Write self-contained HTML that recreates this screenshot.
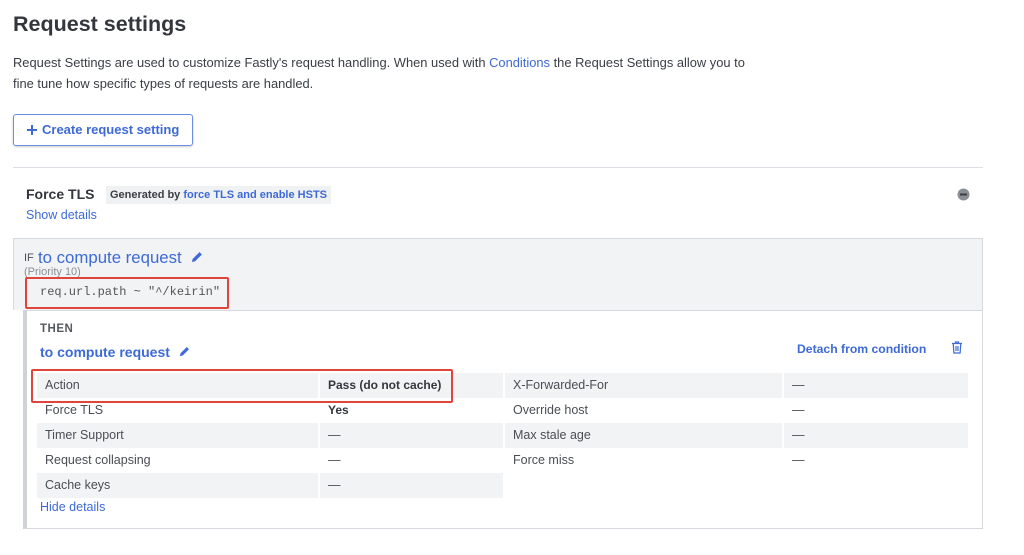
<!DOCTYPE html>
<html><head><meta charset="utf-8"><style>
*{margin:0;padding:0;box-sizing:border-box}
body{width:1024px;height:555px;background:#fff;font-family:"Liberation Sans",sans-serif;color:#3a3e44;position:relative;overflow:hidden}
.a{position:absolute;white-space:nowrap}
.blue{color:#3d6ad6}
.row{position:absolute;height:25px;font-size:12.5px;line-height:25px;padding-left:8px;color:#4a4e55}
.g{background:#f2f3f5}
.red{position:absolute;border:2px solid #e0443c;border-radius:2px}
</style></head><body>
<div class="a" style="left:13px;top:12px;font-size:21.5px;font-weight:bold;color:#33373d">Request settings</div>
<div class="a" style="left:13px;top:52px;font-size:12.9px;line-height:21px;color:#3a3e44">Request Settings are used to customize Fastly's request handling. When used with <span class="blue">Conditions</span> the Request Settings allow you to<br>fine tune how specific types of requests are handled.</div>
<div class="a" style="left:13px;top:114px;width:180px;height:32px;border:1px solid #6b8ee0;border-radius:3px;box-shadow:0 1px 2px rgba(0,0,0,.2);font-size:13px;font-weight:bold;line-height:30px;color:#3d6ad6;padding-left:13px"><svg width="10" height="10" viewBox="0 0 10 10" style="vertical-align:-1px;margin-right:5px"><path d="M5 0v10M0 5h10" stroke="#3d6ad6" stroke-width="2"/></svg>Create request setting</div>
<div class="a" style="left:13px;top:167px;width:970px;height:1px;background:#dcdfe3"></div>
<div class="a" style="left:26px;top:186px;font-size:14px;font-weight:bold;color:#33373d">Force TLS</div>
<div class="a" style="left:106px;top:186px;height:18px;background:#f0f1f3;padding:0 4px;font-size:11px;font-weight:bold;line-height:18px;color:#3a3e44">Generated by <span class="blue">force TLS and enable HSTS</span></div>
<div class="a blue" style="left:26px;top:208px;font-size:12.5px">Show details</div>
<svg class="a" style="left:957px;top:188px" width="13" height="13" viewBox="0 0 13 13"><circle cx="6.5" cy="6.5" r="6" fill="#8a8e95"/><rect x="3" y="5.5" width="7" height="2" fill="#3a3e44"/></svg>
<div class="a" style="left:13px;top:238px;width:970px;height:72px;background:#f2f3f5;border:1px solid #d6d9dd;border-bottom:none"></div>
<div class="a" style="left:24px;top:252px;font-size:11px;color:#4a4e55">IF</div>
<div class="a blue" style="left:38px;top:248px;font-size:16.8px">to compute request</div>
<svg class="a" style="left:191px;top:251px" width="12" height="12" viewBox="0 0 12 12"><path d="M1 11l.6-3L8.5 1.1l2.4 2.4L4 10.4z" fill="#3d6ad6"/></svg>
<div class="a" style="left:24px;top:266px;font-size:11px;color:#8a8e95">(Priority 10)</div>
<div class="a" style="left:40px;top:285px;font-size:12px;font-family:'Liberation Mono',monospace;color:#555">req.url.path ~ "^/keirin"</div>
<div class="red" style="left:25px;top:277px;width:204px;height:32px"></div>
<div class="a" style="left:23px;top:310px;width:960px;height:219px;background:#fff;border:1px solid #d6d9dd;border-left:4px solid #cfd3d8"></div>
<div class="a" style="left:40px;top:323px;font-size:11.5px;font-weight:bold;color:#55595f;letter-spacing:.5px">THEN</div>
<div class="a blue" style="left:40px;top:344px;font-size:14px;font-weight:bold">to compute request</div>
<svg class="a" style="left:179px;top:346px" width="11" height="11" viewBox="0 0 12 12"><path d="M1 11l.6-3L8.5 1.1l2.4 2.4L4 10.4z" fill="#3d6ad6"/></svg>
<div class="a blue" style="left:797px;top:342px;font-size:12.2px;font-weight:bold">Detach from condition</div>
<svg class="a" style="left:951px;top:341px" width="12" height="13" viewBox="0 0 12 13"><path d="M1 2.5h10M4.5 2.5V1h3v1.5M2.2 2.5l.7 9.5h6.2l.7-9.5M5 5v5M7 5v5" stroke="#3d6ad6" stroke-width="1.2" fill="none"/></svg>
<div class="row g" style="left:37px;top:373px;width:281px">Action</div>
<div class="row g" style="left:320px;top:373px;width:183px;font-weight:bold;color:#33373d;font-size:12px">Pass (do not cache)</div>
<div class="row" style="left:37px;top:398px;width:281px">Force TLS</div>
<div class="row" style="left:320px;top:398px;width:183px;font-weight:bold;color:#33373d;font-size:12px">Yes</div>
<div class="row g" style="left:37px;top:423px;width:281px">Timer Support</div>
<div class="row g" style="left:320px;top:423px;width:183px">—</div>
<div class="row" style="left:37px;top:448px;width:281px">Request collapsing</div>
<div class="row" style="left:320px;top:448px;width:183px">—</div>
<div class="row g" style="left:37px;top:473px;width:281px">Cache keys</div>
<div class="row g" style="left:320px;top:473px;width:183px">—</div>
<div class="row g" style="left:505px;top:373px;width:277px">X-Forwarded-For</div>
<div class="row g" style="left:784px;top:373px;width:184px">—</div>
<div class="row" style="left:505px;top:398px;width:277px">Override host</div>
<div class="row" style="left:784px;top:398px;width:184px">—</div>
<div class="row g" style="left:505px;top:423px;width:277px">Max stale age</div>
<div class="row g" style="left:784px;top:423px;width:184px">—</div>
<div class="row" style="left:505px;top:448px;width:277px">Force miss</div>
<div class="row" style="left:784px;top:448px;width:184px">—</div>
<div class="red" style="left:31px;top:369px;width:422px;height:34px"></div>
<div class="a blue" style="left:40px;top:500px;font-size:12.5px">Hide details</div>
</body></html>
